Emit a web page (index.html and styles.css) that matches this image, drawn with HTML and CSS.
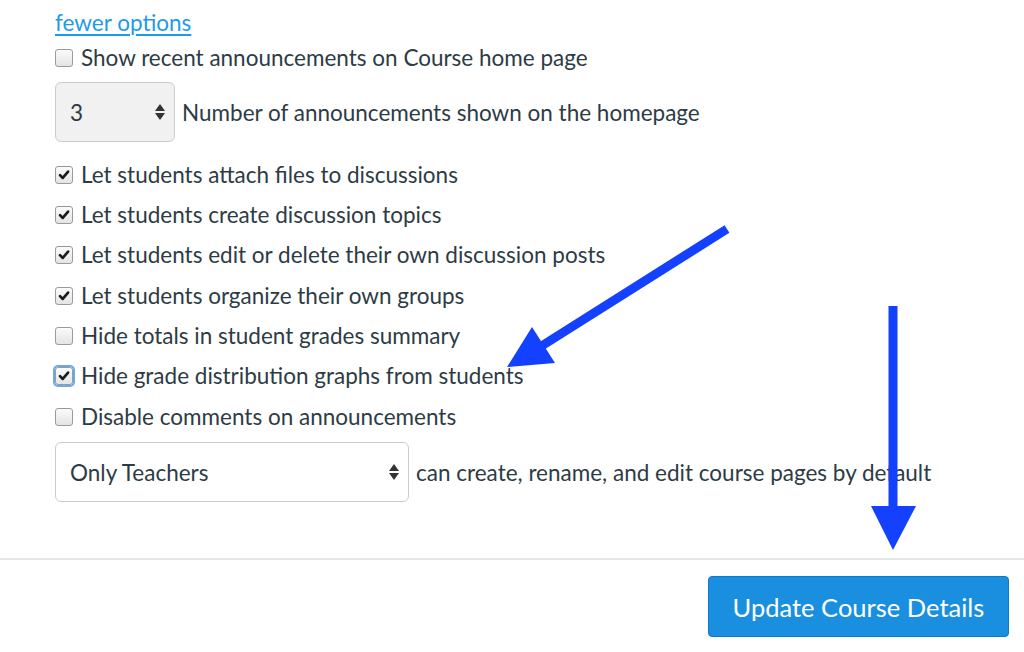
FILE: index.html
```html
<!DOCTYPE html>
<html>
<head>
<meta charset="utf-8">
<link rel="stylesheet" href="styles.css">
</head>
<body>
<div class="page">
  <main class="form">
    <a class="link" href="#">fewer options</a>
    <label class="row first"><span class="cb"></span><span>Show recent announcements on Course home page</span></label>
    <div class="selrow">
      <div class="select small"><span class="val">3</span><span class="arrows"><i class="up"></i><i class="down"></i></span></div>
      <span>Number of announcements shown on the homepage</span>
    </div>
    <div class="checks">
      <label class="row"><span class="cb on"><svg viewBox="0 0 18 18"><path d="M4.5 9.2 L7.6 12.3 L13.6 5.2"/></svg></span><span>Let students attach files to discussions</span></label>
      <label class="row"><span class="cb on"><svg viewBox="0 0 18 18"><path d="M4.5 9.2 L7.6 12.3 L13.6 5.2"/></svg></span><span>Let students create discussion topics</span></label>
      <label class="row"><span class="cb on"><svg viewBox="0 0 18 18"><path d="M4.5 9.2 L7.6 12.3 L13.6 5.2"/></svg></span><span>Let students edit or delete their own discussion posts</span></label>
      <label class="row"><span class="cb on"><svg viewBox="0 0 18 18"><path d="M4.5 9.2 L7.6 12.3 L13.6 5.2"/></svg></span><span>Let students organize their own groups</span></label>
      <label class="row"><span class="cb"></span><span>Hide totals in student grades summary</span></label>
      <label class="row"><span class="cb on focus"><svg viewBox="0 0 18 18"><path d="M4.5 9.2 L7.6 12.3 L13.6 5.2"/></svg></span><span>Hide grade distribution graphs from students</span></label>
      <label class="row"><span class="cb"></span><span>Disable comments on announcements</span></label>
    </div>
    <div class="selrow second">
      <div class="select wide"><span class="val">Only Teachers</span><span class="arrows"><i class="up"></i><i class="down"></i></span></div>
      <span>can create, rename, and edit course pages by default</span>
    </div>
  </main>
  <footer class="actions">
    <button class="btn">Update Course Details</button>
  </footer>
  <svg class="annot" width="1024" height="652" viewBox="0 0 1024 652">
    <line x1="727" y1="229" x2="540" y2="347" stroke="#1440ff" stroke-width="9"/>
    <polygon points="507,367 532,327 555,363" fill="#1440ff"/>
    <line x1="893" y1="306" x2="893" y2="508" stroke="#1440ff" stroke-width="9"/>
    <polygon points="871,506 916,506 893,550" fill="#1440ff"/>
  </svg>
</div>
</body>
</html>
```
FILE: styles.css
```css
html, body {
  margin: 0;
  padding: 0;
  background: #fff;
}
body {
  font-family: Lato, "Open Sans", sans-serif;
  color: #2d3b45;
  font-size: 22.5px;
}
.page {
  position: relative;
  width: 1024px;
  height: 652px;
  overflow: hidden;
}
.form {
  display: flex;
  flex-direction: column;
  padding: 6px 0 0 55px;
  height: 553px;
  box-sizing: border-box;
}
.link {
  height: 34px;
  line-height: 34px;
  color: #1e9be8;
  text-decoration: underline;
  text-underline-offset: 3px;
  text-decoration-thickness: 1.5px;
  align-self: flex-start;
}
.row {
  display: flex;
  align-items: center;
  gap: 8px;
  height: 40.33px;
}
.row.first {
  height: 34px;
}
.cb {
  width: 16px;
  height: 16px;
  border: 1px solid #9a9a9a;
  border-radius: 3px;
  background: linear-gradient(#fbfbfb, #e4e4e4);
  display: flex;
  align-items: center;
  justify-content: center;
  flex: none;
  margin-top: 1px;
}
.cb svg {
  width: 16px;
  height: 16px;
}
.cb svg path {
  fill: none;
  stroke: #1c1c1c;
  stroke-width: 3;
  stroke-linecap: round;
  stroke-linejoin: round;
}
.cb.focus {
  box-shadow: 0 0 0 2px #6aa8f0;
}
.selrow {
  display: flex;
  align-items: center;
  gap: 7px;
  margin-top: 8px;
  height: 60px;
}
.selrow.second {
  margin-top: 6px;
}
.checks {
  display: flex;
  flex-direction: column;
  margin-top: 12px;
}
.select {
  height: 60px;
  box-sizing: border-box;
  border: 1px solid #c7cdd1;
  border-radius: 6px;
  display: flex;
  align-items: center;
  justify-content: space-between;
  padding: 0 9px 0 14px;
}
.select.small {
  width: 120px;
  background: #f1f1f1;
}
.select.wide {
  width: 354px;
  background: #fff;
}
.arrows {
  display: flex;
  flex-direction: column;
  gap: 2px;
}
.arrows i {
  display: block;
  width: 0;
  height: 0;
  border-left: 5px solid transparent;
  border-right: 5px solid transparent;
}
.arrows .up {
  border-bottom: 7px solid #333;
}
.arrows .down {
  border-top: 7px solid #333;
}
.actions {
  border-top: 2px solid #e6e6e6;
  display: flex;
  justify-content: flex-end;
  padding: 16px 15px 0 0;
  margin-top: 5px;
}
.btn {
  width: 301px;
  height: 61px;
  background: #1a8fe0;
  border: 1px solid #0f7ac6;
  border-radius: 4px;
  color: #fff;
  font-family: Lato, "Open Sans", sans-serif;
  font-size: 25.5px;
  padding: 0;
}
.annot {
  position: absolute;
  left: 0;
  top: 0;
  pointer-events: none;
}
```
